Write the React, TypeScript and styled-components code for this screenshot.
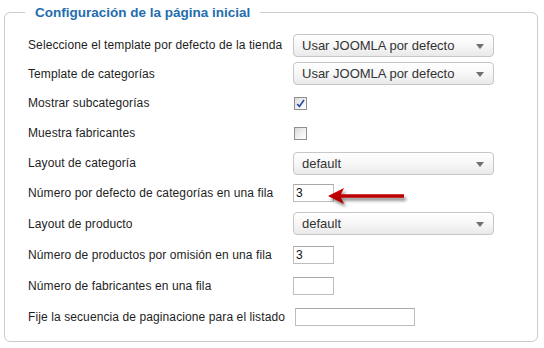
import * as React from 'react';
import styled, { createGlobalStyle } from 'styled-components';

const GlobalStyle = createGlobalStyle`
  html, body {
    margin: 0;
    padding: 0;
    background: #ffffff;
  }
  body {
    font-family: "Liberation Sans", Arial, sans-serif;
  }
`;

const Page = styled.div`
  padding: 4px 0 0 4px;
  width: 544px;
  height: 348px;
  box-sizing: border-box;
`;

const Fieldset = styled.fieldset`
  margin: 0;
  width: 534px;
  box-sizing: border-box;
  border: 1px solid #cccccc;
  border-radius: 6px;
  padding: 10px 10px 9px 23px;
`;

const Legend = styled.legend`
  margin-left: -3px;
  padding: 0 10px;
  font-size: 13.5px;
  line-height: 17px;
  font-weight: bold;
  color: #236db0;
`;

const Form = styled.div`
  display: grid;
  grid-template-columns: 265px 1fr;
  grid-template-rows: 28px 29px 30px 30px 30px 30px 31px 31px 31px 31px;
  align-items: center;
`;

const Label = styled.div`
  font-size: 12px;
  letter-spacing: 0.1px;
  color: #1e1e1e;
  white-space: nowrap;
`;

const Cell = styled.div<{ $shift?: number }>`
  position: relative;
  display: flex;
  align-items: center;
  padding-left: ${(p) => p.$shift ?? 0}px;
`;

const Select = styled.div`
  position: relative;
  width: 201px;
  height: 23px;
  box-sizing: border-box;
  border: 1px solid #c6c6c6;
  border-radius: 4px;
  background: linear-gradient(#ffffff 0%, #f7f7f7 50%, #e9e9e9 100%);
  display: flex;
  align-items: center;
  padding-left: 8px;
  font-size: 13px;
  color: #333333;
`;

const Caret = styled.span`
  position: absolute;
  right: 9px;
  top: 9px;
  width: 0;
  height: 0;
  border-left: 4px solid transparent;
  border-right: 4px solid transparent;
  border-top: 5px solid #6f6f6f;
`;

const Check = styled.span`
  margin-left: 1px;
  width: 13px;
  height: 13px;
  box-sizing: border-box;
  border: 1px solid #8e8f8f;
  background: linear-gradient(135deg, #d8d8d8 0%, #f4f4f4 60%, #ffffff 100%);
  display: flex;
  align-items: center;
  justify-content: center;
`;

const TextInput = styled.div<{ $wide?: boolean }>`
  width: ${(p) => (p.$wide ? 120 : 41)}px;
  height: 18px;
  box-sizing: border-box;
  border: 1px solid #bdbdbd;
  border-top-color: #a9a9a9;
  background: #ffffff;
  font-size: 12px;
  line-height: 16px;
  padding-left: 2px;
  color: #111111;
`;

const Pointer = styled.svg`
  position: absolute;
  left: 34px;
  top: 1px;
`;

const RedArrow = () => (
  <Pointer width="84" height="26" viewBox="0 0 84 26">
    <defs>
      <filter id="arrowShadow" x="-10%" y="-40%" width="130%" height="200%">
        <feDropShadow dx="2" dy="3" stdDeviation="1.6" floodColor="#000" floodOpacity="0.45" />
      </filter>
      <linearGradient id="arrowFill" x1="0" y1="0" x2="0" y2="1">
        <stop offset="0" stopColor="#d60000" />
        <stop offset="1" stopColor="#a00000" />
      </linearGradient>
    </defs>
    <path
      d="M1 11 L17 3 L14 9.2 L77 9.2 L77 12.8 L14 12.8 L17 19 Z"
      fill="url(#arrowFill)"
      filter="url(#arrowShadow)"
    />
  </Pointer>
);

const Dropdown = ({ value }: { value: string }) => (
  <Select>
    {value}
    <Caret />
  </Select>
);

const CheckBox = ({ checked }: { checked?: boolean }) => (
  <Check>
    {checked && (
      <svg width="9" height="9" viewBox="0 0 9 9">
        <path d="M1.2 5 L3.4 7.4 L8 1" fill="none" stroke="#2d4ea3" strokeWidth="1.7" />
      </svg>
    )}
  </Check>
);

export default function App() {
  return (
    <>
      <GlobalStyle />
      <Page>
        <Fieldset>
          <Legend>Configuración de la página inicial</Legend>
          <Form>
            <Label>Seleccione el template por defecto de la tienda</Label>
            <Cell>
              <Dropdown value="Usar JOOMLA por defecto" />
            </Cell>

            <Label>Template de categorías</Label>
            <Cell>
              <Dropdown value="Usar JOOMLA por defecto" />
            </Cell>

            <Label>Mostrar subcategorías</Label>
            <Cell>
              <CheckBox checked />
            </Cell>

            <Label>Muestra fabricantes</Label>
            <Cell>
              <CheckBox />
            </Cell>

            <Label>Layout de categoría</Label>
            <Cell>
              <Dropdown value="default" />
            </Cell>

            <Label>Número por defecto de categorías en una fila</Label>
            <Cell>
              <TextInput>3</TextInput>
              <RedArrow />
            </Cell>

            <Label>Layout de producto</Label>
            <Cell>
              <Dropdown value="default" />
            </Cell>

            <Label>Número de productos por omisión en una fila</Label>
            <Cell>
              <TextInput>3</TextInput>
            </Cell>

            <Label>Número de fabricantes en una fila</Label>
            <Cell>
              <TextInput />
            </Cell>

            <Label>Fije la secuencia de paginacione para el listado</Label>
            <Cell $shift={2}>
              <TextInput $wide />
            </Cell>
          </Form>
        </Fieldset>
      </Page>
    </>
  );
}
